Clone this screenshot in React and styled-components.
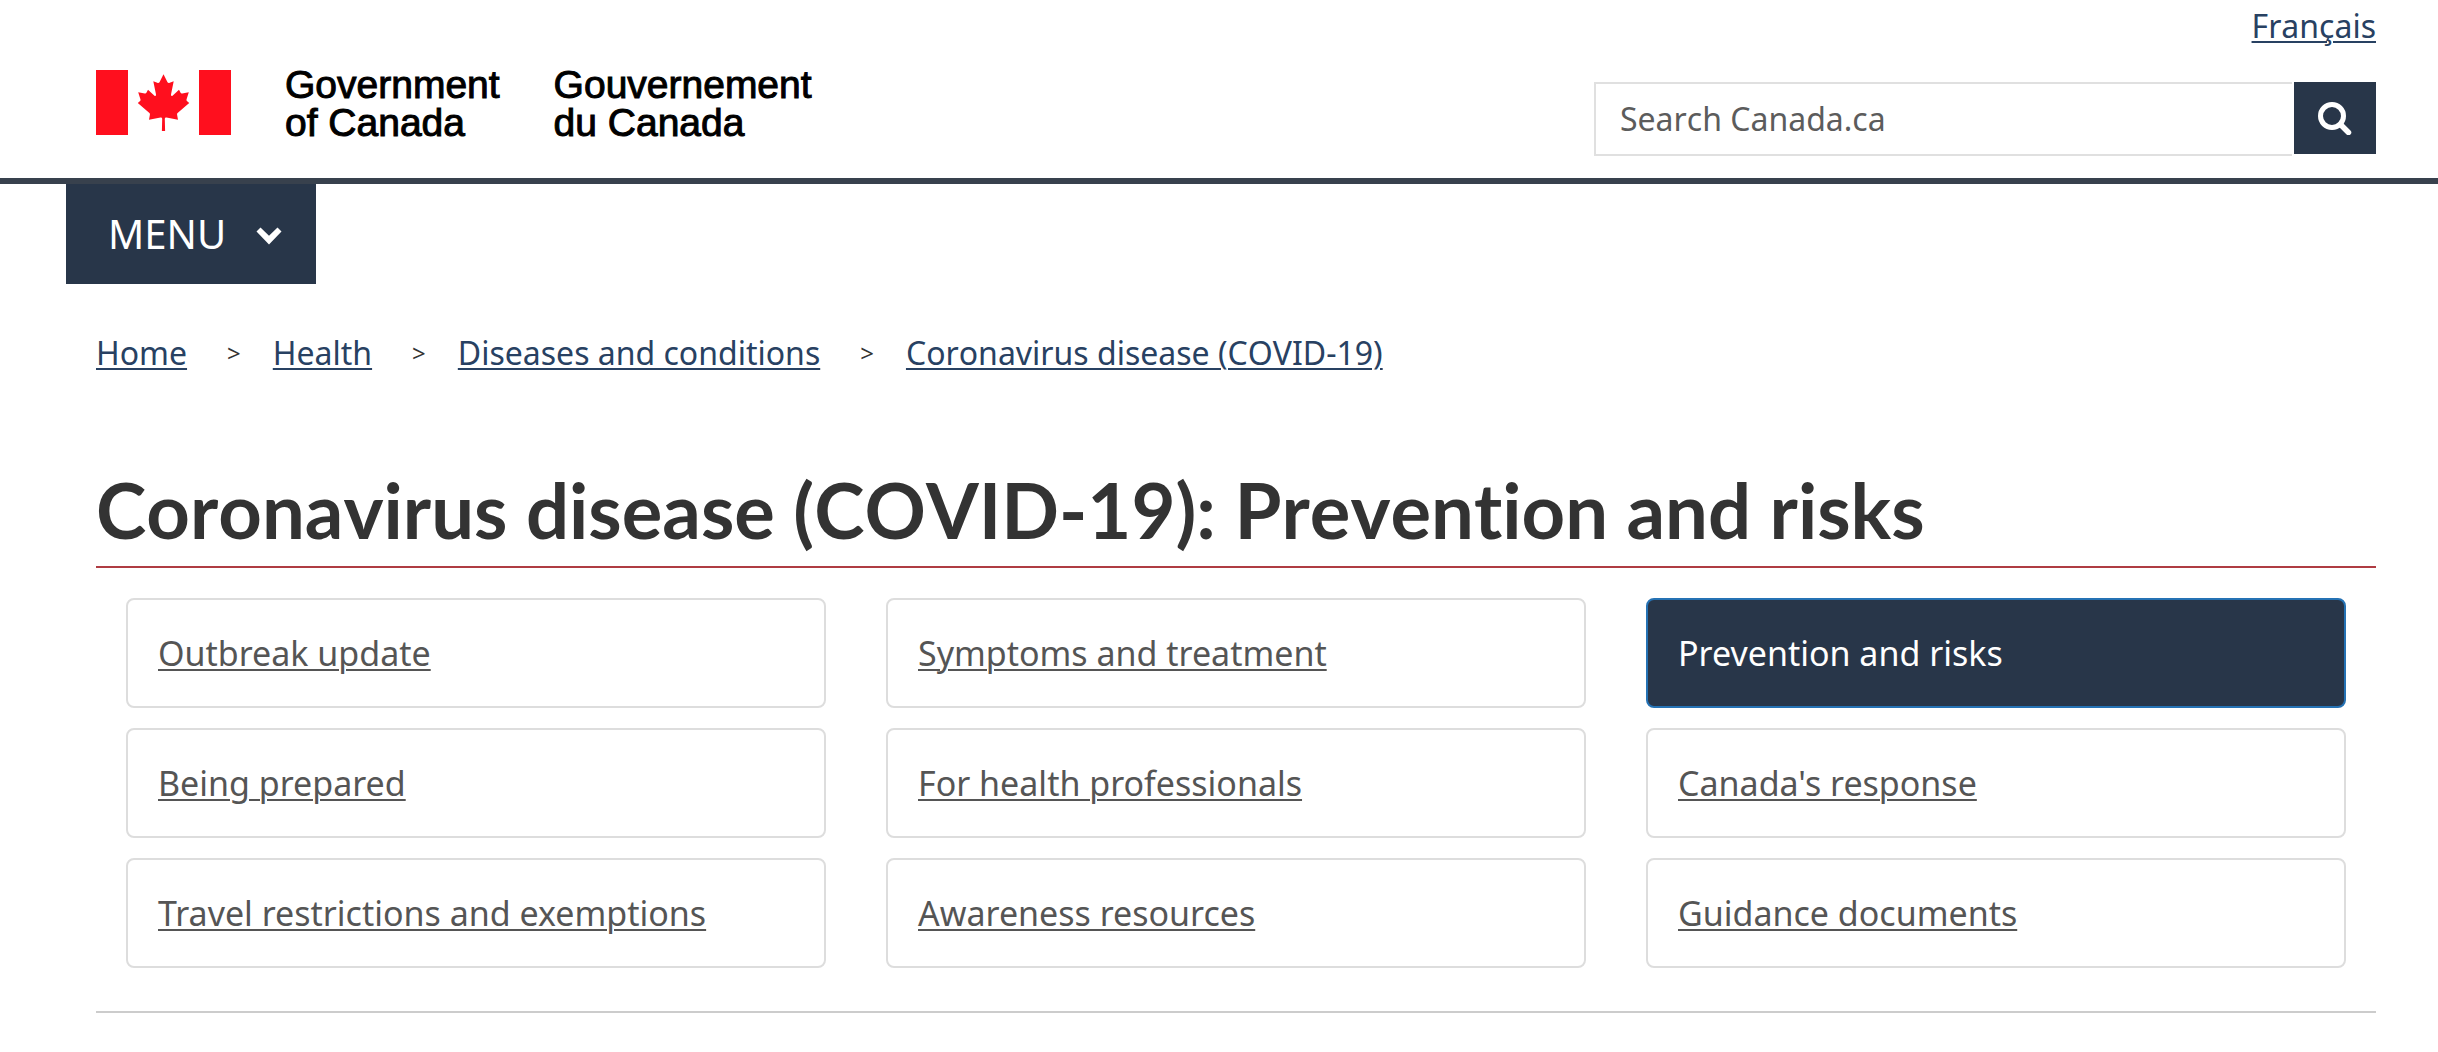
import React from "react";
import styled, { createGlobalStyle } from "styled-components";

const GlobalStyle = createGlobalStyle`
  * {
    box-sizing: border-box;
  }

  body {
    margin: 0;
    background: #ffffff;
    color: #333333;
    font-family: "Noto Sans", sans-serif;
    font-size: 32px;
    line-height: 44px;
    font-kerning: none;
    font-variant-ligatures: none;
  }
`;

const Container = styled.div`
  padding: 0 62px 0 96px;
`;

const Header = styled.header`
  border-bottom: 6px solid #38414d;
`;

const HeaderInner = styled(Container)`
  display: flex;
  justify-content: space-between;
`;

const Brand = styled.a`
  display: flex;
  align-items: flex-start;
  padding-top: 70px;
  color: #000000;
  text-decoration: none;
`;

const Flag = styled.svg`
  width: 135px;
  height: 65px;
`;

const BrandName = styled.span`
  margin-left: 54px;
  margin-top: -4px;
  font-family: "Liberation Sans", Arial, sans-serif;
  font-size: 39px;
  line-height: 38px;
  -webkit-text-stroke: 1px #000000;
`;

const HeaderTools = styled.div`
  display: flex;
  flex-direction: column;
  align-items: flex-end;
  width: 782px;
  padding: 4px 0 22px;
`;

const Link = styled.a`
  color: #284162;
  text-underline-offset: 3px;
  text-decoration-thickness: 2px;
`;

const SearchForm = styled.form`
  display: flex;
  align-items: flex-start;
  width: 100%;
  margin-top: 34px;
`;

const SearchInput = styled.input`
  flex: 1;
  height: 74px;
  margin-right: 2px;
  padding: 0 24px 2px;
  border: 2px solid #e0e0e0;
  border-right: none;
  background: #ffffff;
  color: #555555;
  font: inherit;

  &::placeholder {
    color: #5c5c5c;
    opacity: 1;
  }
`;

const SearchButton = styled.button`
  display: flex;
  align-items: center;
  justify-content: center;
  width: 82px;
  height: 72px;
  padding: 0;
  border: none;
  background: #283649;
  color: #ffffff;
`;

const MenuBar = styled.nav`
  padding-left: 66px;
`;

const MenuButton = styled.button`
  display: flex;
  align-items: center;
  gap: 30px;
  height: 100px;
  padding: 0 34px 0 42px;
  border: none;
  background: #283649;
  color: #ffffff;
  font: inherit;
  font-size: 40px;
`;

const Breadcrumb = styled.ol`
  display: flex;
  margin: 0;
  padding: 47px 0 0;
  list-style: none;
`;

const Crumb = styled.li`
  display: flex;
  align-items: center;

  & + &::before {
    content: ">";
    margin: 0 32px 0 40px;
    font-size: 24px;
  }
`;

const Title = styled.h1`
  margin: 89px 0 30px;
  padding-bottom: 10px;
  border-bottom: 2px solid #af3c43;
  font-family: Lato, sans-serif;
  font-size: 76px;
  font-weight: 700;
  line-height: 92px;
`;

const TopicGrid = styled.ul`
  display: grid;
  grid-template-columns: repeat(3, 1fr);
  gap: 20px 60px;
  margin: 0;
  padding: 0 30px 43px;
  border-bottom: 2px solid #cccccc;
  list-style: none;
`;

const TopicLink = styled.a`
  display: block;
  padding: 30px;
  border: 2px solid ${(props) => (props.$active ? "#2572b4" : "#dddddd")};
  border-radius: 8px;
  background: ${(props) => (props.$active ? "#283649" : "#ffffff")};
  color: ${(props) => (props.$active ? "#ffffff" : "#555555")};
  font-size: 34px;
  font-kerning: normal;
  line-height: 46px;
  text-decoration: ${(props) => (props.$active ? "none" : "underline")};
  text-decoration-thickness: 2px;
  text-underline-offset: 3px;
`;

const crumbs = [
  "Home",
  "Health",
  "Diseases and conditions",
  "Coronavirus disease (COVID-19)",
];

const topics = [
  "Outbreak update",
  "Symptoms and treatment",
  "Prevention and risks",
  "Being prepared",
  "For health professionals",
  "Canada's response",
  "Travel restrictions and exemptions",
  "Awareness resources",
  "Guidance documents",
];

const CanadaFlag = () => (
  <Flag viewBox="0 0 135 65" fill="#ff0f1e" aria-hidden="true">
    <path d="M0 0h32v65H0zM103 0h32v65h-32z" />
    <path d="M67.5 4.3L71.500 12.200Q72.300 13.400 73.700 12.800L77.700 11.200 75 24.500Q74.900 26.800 76.800 25.400L83 19.800 84.600 22.800Q85 23.700 86.200 23.500L92.800 22.200 90.500 29.500Q90.200 30.700 91.200 31.300L93.200 33 81.600 43Q80.800 43.800 81.100 44.800L82 49.800 70.500 47.500Q68.800 47.300 68.800 48.800L69.100 61H65.900L66.200 48.800Q66.200 47.300 64.500 47.500L53 49.800 53.900 44.800Q54.200 43.800 53.400 43L41.800 33 43.800 31.300Q44.800 30.700 44.500 29.500L42.200 22.200 48.800 23.500Q50 23.700 50.400 22.800L52 19.800 58.200 25.400Q60.100 26.800 60 24.500L57.300 11.200 61.300 12.800Q62.700 13.400 63.500 12.200z" />
  </Flag>
);

const SearchIcon = () => (
  <svg width="34" height="34" viewBox="0 0 34 34" fill="none" stroke="currentColor" aria-hidden="true">
    <circle cx="14" cy="15" r="11.500" strokeWidth="5" />
    <path d="M22.500 23.500l8 8" strokeWidth="5.500" strokeLinecap="round" />
  </svg>
);

const ChevronDown = () => (
  <svg width="26" height="22" viewBox="0 0 26 22" fill="currentColor" aria-hidden="true">
    <path d="M4.500 4.500L13 12.800 21.500 4.500 25.500 8.600 13 21.500.500 8.600z" />
  </svg>
);

const App = () => {
  return (
    <>
      <GlobalStyle />
      <Header>
        <HeaderInner>
          <Brand href="#">
            <CanadaFlag />
            <BrandName>
              Government
              <br />
              of Canada
            </BrandName>
            <BrandName lang="fr">
              Gouvernement
              <br />
              du Canada
            </BrandName>
          </Brand>
          <HeaderTools>
            <Link href="#" lang="fr">
              Français
            </Link>
            <SearchForm role="search">
              <SearchInput
                type="text"
                name="q"
                aria-label="Search Canada.ca"
                placeholder="Search Canada.ca"
              />
              <SearchButton type="button" aria-label="Search">
                <SearchIcon />
              </SearchButton>
            </SearchForm>
          </HeaderTools>
        </HeaderInner>
      </Header>
      <MenuBar>
        <MenuButton type="button">
          MENU
          <ChevronDown />
        </MenuButton>
      </MenuBar>
      <Container as="main">
        <nav aria-label="Breadcrumb">
          <Breadcrumb>
            {crumbs.map((crumb) => (
              <Crumb key={crumb}>
                <Link href="#">{crumb}</Link>
              </Crumb>
            ))}
          </Breadcrumb>
        </nav>
        <Title>Coronavirus disease (COVID-19): Prevention and risks</Title>
        <TopicGrid>
          {topics.map((topic) => (
            <li key={topic}>
              <TopicLink href="#" $active={topic === "Prevention and risks"}>
                {topic}
              </TopicLink>
            </li>
          ))}
        </TopicGrid>
      </Container>
    </>
  );
};

export default App;
